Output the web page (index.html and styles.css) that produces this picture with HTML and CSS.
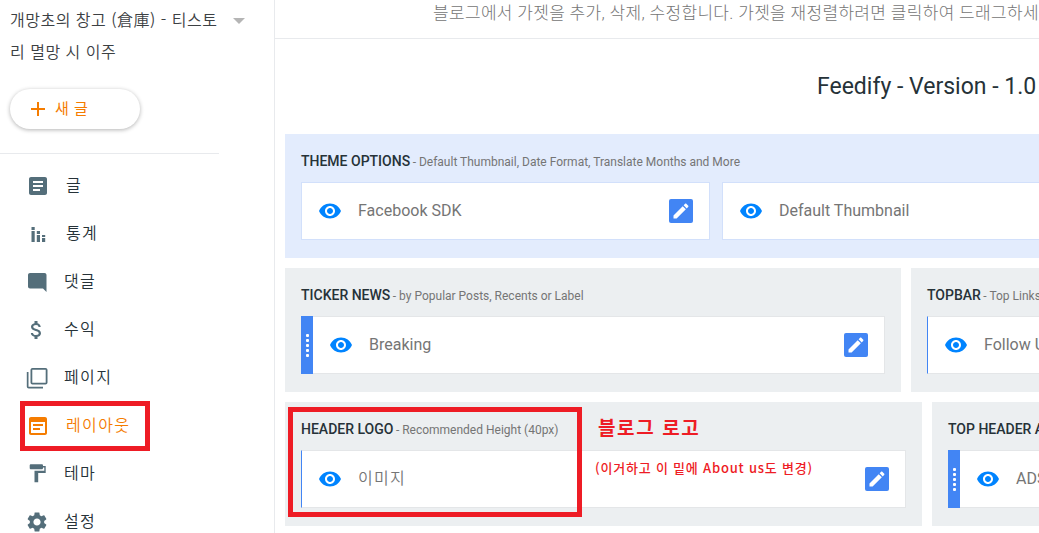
FILE: index.html
```html
<!DOCTYPE html>
<html lang="ko">
<head>
  <meta charset="UTF-8">
  <meta name="viewport" content="width=device-width, initial-scale=1.0">
  <title>레이아웃</title>
  <link rel="stylesheet" href="styles.css">
</head>

<body>
  <!-- 공통 아이콘 -->
  <svg class="symbols" width="0" height="0">
    <symbol id="eye" viewBox="0 0 24 24">
      <path d="M12 4.5C7 4.5 2.73 7.61 1 12c1.73 4.39 6 7.5 11 7.5s9.27-3.11 11-7.5c-1.73-4.39-6-7.5-11-7.5zM12 17c-2.76 0-5-2.24-5-5s2.24-5 5-5 5 2.24 5 5-2.24 5-5 5zm0-8c-1.66 0-3 1.34-3 3s1.34 3 3 3 3-1.34 3-3-1.34-3-3-3z"/>
    </symbol>
    <symbol id="pencil" viewBox="0 0 24 24">
      <path d="M3 17.25V21h3.75L17.81 9.94l-3.75-3.75L3 17.25zM20.71 7.04c.39-.39.39-1.02 0-1.41l-2.34-2.34c-.39-.39-1.02-.39-1.41 0l-1.83 1.83 3.75 3.75 1.83-1.83z"/>
    </symbol>
  </svg>

  <div class="app">
    <aside class="sidebar">
      <div class="blog_select">
        <p class="blog_name">개망초의 창고 (倉庫) - 티스토<br>리 멸망 시 이주</p>
        <span class="arrow"></span>
      </div>
      <div class="new_post">
        <svg width="24" height="24" viewBox="0 0 24 24"><path d="M11 5h2v6h6v2h-6v6h-2v-6H5v-2h6z"/></svg>
        <span>새 글</span>
      </div>
      <ul class="menu">
        <li>
          <svg viewBox="0 0 24 24"><path d="M19 3H5c-1.1 0-2 .9-2 2v14c0 1.1.9 2 2 2h14c1.1 0 2-.9 2-2V5c0-1.100-.9-2-2-2zm-5 14H7v-2h7v2zm3-4H7v-2h10v2zm0-4H7V7h10v2z"/></svg>
          <span class="in">글</span>
        </li>
        <li>
          <svg viewBox="0 0 24 24"><path d="M5.500 5h3.200v3H5.500zM5.500 9h3.200v11H5.500zM10.800 9H14v3h-3.200zM10.800 13H14v7h-3.200zM16 13h3.200v2H16zM16 16h3.200v4H16z"/></svg>
          <span class="in">통계</span>
        </li>
        <li>
          <svg viewBox="0 0 24 24"><path d="M20.500 22l-3.500-3.500H4c-1.100 0-2-.9-2-2V5c0-1.100.9-2 2-2h14.500c1.100 0 2 .9 2 2z"/></svg>
          <span>댓글</span>
        </li>
        <li>
          <svg viewBox="0 0 24 24"><path transform="translate(-1.500 0)" d="M11.800 10.900c-2.270-.59-3-1.200-3-2.150 0-1.090 1.010-1.850 2.700-1.850 1.780 0 2.440.85 2.500 2.100h2.210c-.07-1.720-1.120-3.300-3.210-3.810V3h-3v2.160c-1.940.42-3.500 1.680-3.500 3.610 0 2.310 1.910 3.460 4.700 4.130 2.500.6 3 1.480 3 2.410 0 .69-.49 1.790-2.700 1.790-2.060 0-2.870-.92-2.980-2.100h-2.200c.12 2.190 1.760 3.420 3.680 3.830V21h3v-2.150c1.950-.37 3.500-1.500 3.500-3.550 0-2.840-2.430-3.810-4.700-4.400z"/></svg>
          <span>수익</span>
        </li>
        <li>
          <svg viewBox="0 0 24 24"><path d="M2.500 6H.8v14.500c0 1.100.9 2 2 2H17v-1.800H2.500zM19.500 2h-13c-1.100 0-2 .9-2 2v12.500c0 1.100.9 2 2 2h13c1.100 0 2-.9 2-2V4c0-1.100-.9-2-2-2zm.2 14.700H6.300V3.800h13.400z"/></svg>
          <span>페이지</span>
        </li>
        <li class="active">
          <svg viewBox="0 0 24 24"><path d="M19 3H5c-1.100 0-2 .9-2 2v14c0 1.100.9 2 2 2h14c1.100 0 2-.9 2-2V5c0-1.100-.9-2-2-2zm0 16H5V8h14zM7 10h10v2H7zM7 14h7v2H7z"/></svg>
          <span class="in">레이아웃</span>
        </li>
        <li>
          <svg viewBox="0 0 24 24"><path d="M17 4V3.500c0-.8-.5-1.300-1.300-1.300H5c-.8 0-1.300.5-1.300 1.300V6c0 .8.500 1.300 1.300 1.300h10.700c.8 0 1.300-.5 1.300-1.300v-.6h1.300v3.400H8.500v11.500h3.700v-9.200h7.500V4z"/></svg>
          <span>테마</span>
        </li>
        <li>
          <svg viewBox="0 0 24 24"><path transform="translate(-1 0)" d="M19.140 12.940c.04-.3.06-.61.06-.94 0-.32-.02-.64-.07-.94l2.030-1.580c.18-.14.23-.41.12-.61l-1.920-3.320c-.12-.22-.37-.29-.59-.22l-2.390.96c-.5-.38-1.030-.7-1.620-.94l-.36-2.540c-.04-.24-.24-.41-.48-.41h-3.840c-.24 0-.43.17-.47.41l-.36 2.540c-.59.24-1.130.57-1.620.94l-2.390-.96c-.22-.08-.47 0-.59.22L2.740 8.870c-.12.21-.08.47.12.61l2.030 1.580c-.05.3-.09.63-.09.94s.02.64.07.94l-2.030 1.580c-.18.14-.23.41-.12.61l1.920 3.320c.12.22.37.29.59.22l2.390-.96c.5.38 1.030.7 1.620.94l.36 2.540c.05.24.24.41.48.41h3.840c.24 0 .44-.17.47-.41l.36-2.540c.59-.24 1.130-.56 1.620-.94l2.390.96c.22.08.47 0 .59-.22l1.920-3.320c.12-.22.07-.47-.12-.61l-2.010-1.580zM12 15.600c-1.980 0-3.600-1.620-3.600-3.600s1.620-3.600 3.600-3.600 3.600 1.620 3.600 3.600-1.620 3.600-3.600 3.600z"/></svg>
          <span>설정</span>
        </li>
      </ul>
    </aside>

    <main class="main">
      <div class="guide">블로그에서 가젯을 추가, 삭제, 수정합니다. 가젯을 재정렬하려면 클릭하여 드래그하세요</div>
      <h1 class="version">Feedify - Version - 1.0</h1>

      <div class="row">
        <section class="panel theme">
          <h2>THEME OPTIONS <small>- Default Thumbnail, Date Format, Translate Months and More</small></h2>
          <div class="cards">
            <div class="card">
              <svg class="eye"><use href="#eye"/></svg>
              <span class="label">Facebook SDK</span>
              <span class="edit"><svg><use href="#pencil"/></svg></span>
            </div>
            <div class="card">
              <svg class="eye"><use href="#eye"/></svg>
              <span class="label">Default Thumbnail</span>
            </div>
          </div>
        </section>
      </div>

      <div class="row">
        <section class="panel ticker">
          <h2>TICKER NEWS <small>- by Popular Posts, Recents or Label</small></h2>
          <div class="cards">
            <div class="card drag">
              <span class="handle"><i></i><i></i><i></i><i></i><i></i></span>
              <svg class="eye"><use href="#eye"/></svg>
              <span class="label">Breaking</span>
              <span class="edit"><svg><use href="#pencil"/></svg></span>
            </div>
          </div>
        </section>
        <section class="panel rest">
          <h2>TOPBAR <small>- Top Links</small></h2>
          <div class="cards">
            <div class="card line">
              <svg class="eye"><use href="#eye"/></svg>
              <span class="label">Follow U</span>
            </div>
          </div>
        </section>
      </div>

      <div class="row">
        <section class="panel logo">
          <h2>HEADER LOGO <small>- Recommended Height (40px)</small></h2>
          <div class="cards">
            <div class="card line">
              <svg class="eye"><use href="#eye"/></svg>
              <span class="label ko">이미지</span>
              <span class="edit"><svg><use href="#pencil"/></svg></span>
            </div>
          </div>
        </section>
        <section class="panel rest">
          <h2>TOP HEADER A</h2>
          <div class="cards">
            <div class="card drag">
              <span class="handle"><i></i><i></i><i></i><i></i><i></i></span>
              <svg class="eye"><use href="#eye"/></svg>
              <span class="label">ADS</span>
            </div>
          </div>
        </section>
      </div>
    </main>

    <!-- 빨간색 표시 -->
    <div class="mark mark_menu"></div>
    <div class="mark mark_logo"></div>
    <p class="note note_title">블로그 로고</p>
    <p class="note note_sub">(이거하고 이 밑에 About us도 변경)</p>
  </div>
</body>

</html>
```
FILE: styles.css
```css
* {
  box-sizing: border-box;
  margin: 0;
  padding: 0;
}

body {
  background-color: #ffffff;
  color: #263238;
  font-family: Roboto, 'Noto Sans CJK KR', sans-serif;
  overflow: hidden;
}

.symbols {
  position: absolute;
}

.app {
  position: relative;
  display: flex;
  width: 1039px;
  height: 533px;
  overflow: hidden;
}

/* 사이드바 */
.sidebar {
  flex: 0 0 275px;
  border-right: 1px solid #e8eaed;
  font-family: 'Noto Sans CJK KR', sans-serif;
  font-weight: 350;
}

.blog_select {
  display: flex;
  padding: 3px 0 0 10px;
}

.blog_name {
  width: 223px;
  color: #3c4043;
  font-size: 16px;
  letter-spacing: 0.5px;
  line-height: 32px;
  white-space: nowrap;
}

.arrow {
  width: 12px;
  height: 6px;
  margin-top: 15px;
  border: 6px solid transparent;
  border-top-color: #b5b5b5;
  border-bottom: 0;
}

.new_post {
  display: flex;
  align-items: center;
  width: 130px;
  height: 40px;
  margin: 22px 0 24px 10px;
  padding-left: 16px;
  border-radius: 20px;
  box-shadow: 0 1px 4px rgba(0, 0, 0, 0.3);
  color: #f57c00;
  fill: #f57c00;
  font-size: 15px;
  font-weight: 400;
  letter-spacing: 0.5px;
}

.new_post span {
  margin: -4px 0 0 5px;
}

.menu {
  width: 219px;
  padding-top: 8px;
  border-top: 1px solid #e8eaed;
  list-style: none;
}

.menu li {
  display: flex;
  align-items: center;
  height: 48px;
  padding-left: 26px;
  font-size: 16px;
  letter-spacing: 1.4px;
}

.menu svg {
  width: 24px;
  height: 24px;
  fill: #546e7a;
}

.menu span {
  margin: -5px 0 0 14px;
}

.menu .in {
  margin-left: 16px;
}

.menu .active {
  color: #f57c00;
}

.menu .active svg {
  fill: #f57c00;
}

/* 본문 */
.main {
  flex: 1;
  min-width: 0;
  overflow: hidden;
}

.guide {
  height: 39px;
  padding-left: 158px;
  border-bottom: 1px solid #e8eaed;
  color: #757575;
  font-size: 17px;
  font-weight: 300;
  letter-spacing: 0.32px;
  line-height: 27px;
  white-space: nowrap;
}

.version {
  height: 95px;
  padding-left: 542px;
  font-size: 23px;
  font-weight: 400;
  line-height: 95px;
  white-space: nowrap;
}

.row {
  display: flex;
  gap: 10px;
  margin: 0 0 10px 10px;
}

.panel {
  flex: none;
  height: 124px;
  padding: 16px;
  background-color: #eceff1;
}

.theme {
  width: 875px;
  background-color: #e3ecfd;
}

.ticker {
  width: 616px;
}

.logo {
  width: 637px;
}

.rest {
  width: 249px;
}

.panel h2 {
  height: 32px;
  font-size: 14px;
  font-weight: 500;
  line-height: 22px;
  white-space: nowrap;
}

.panel small {
  margin-left: -1px;
  color: #757575;
  font-size: 12px;
  font-weight: 400;
}

.cards {
  display: flex;
  gap: 12px;
}

.card {
  display: flex;
  flex: 1;
  align-items: center;
  height: 58px;
  padding: 0 16px;
  border: 1px solid #e4e6e8;
  background-color: #ffffff;
}

.theme .card {
  flex: 0 0 409px;
  border-color: #d2e0fb;
}

.drag {
  padding-left: 0;
  border-left: 0;
}

.line {
  border-left-color: #4285f4;
}

.handle {
  display: flex;
  flex-direction: column;
  align-items: center;
  justify-content: center;
  gap: 2px;
  width: 12px;
  height: 58px;
  margin: -1px 16px -1px 0;
  background-color: #4285f4;
}

.handle i {
  width: 3px;
  height: 3px;
  border-radius: 1px;
  background-color: #ffffff;
}

.eye {
  width: 24px;
  height: 24px;
  margin-bottom: 1px;
  fill: #0084ff;
}

.label {
  margin: 0 0 2px 16px;
  color: #757575;
  font-size: 16px;
}

.ko {
  margin-bottom: 4px;
  font-weight: 350;
  letter-spacing: 1.3px;
}

.edit {
  display: flex;
  align-items: center;
  justify-content: center;
  width: 24px;
  height: 24px;
  margin-left: auto;
  border-radius: 2px;
  background-color: #4285f4;
}

.edit svg {
  width: 20px;
  height: 20px;
  fill: #ffffff;
}

/* 표시 상자와 메모는 화면 위에 겹쳐서 배치 */
.mark {
  position: absolute;
  border: 5px solid #ee1c25;
}

.mark_menu {
  top: 401px;
  left: 20px;
  width: 130px;
  height: 50px;
}

.mark_logo {
  top: 407px;
  left: 288px;
  width: 294px;
  height: 110px;
}

.note {
  position: absolute;
  color: #ee1c25;
  font-family: 'Noto Sans CJK KR', sans-serif;
  font-weight: 700;
  white-space: nowrap;
}

.note_title {
  top: 413px;
  left: 598px;
  font-size: 19px;
  letter-spacing: 1.6px;
  line-height: 28px;
}

.note_sub {
  top: 458px;
  left: 595px;
  font-size: 13px;
  font-weight: 500;
  letter-spacing: 0.8px;
  line-height: 20px;
}
```
